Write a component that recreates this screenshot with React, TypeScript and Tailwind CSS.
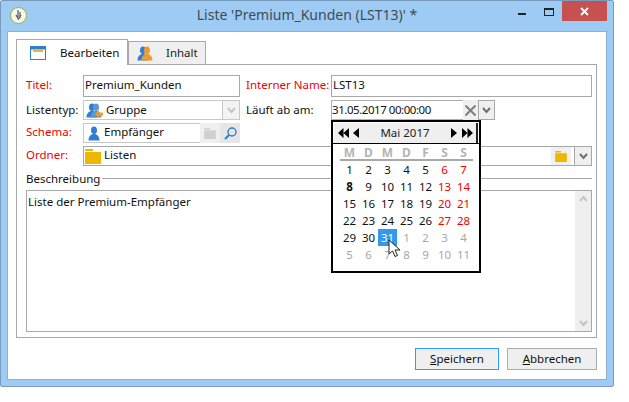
import { FC, ReactNode } from "react";

const weeks = [
  ["1", "2", "3", "4", "5", "6", "7"],
  ["8", "9", "10", "11", "12", "13", "14"],
  ["15", "16", "17", "18", "19", "20", "21"],
  ["22", "23", "24", "25", "26", "27", "28"],
  ["29", "30", "31", "1", "2", "3", "4"],
  ["5", "6", "7", "8", "9", "10", "11"],
];

const UserIcon: FC<{ color?: string }> = ({ color = "#2f7fd0" }) => (
  <svg width="12" height="15" viewBox="0 0 12 15">
    <ellipse cx="6" cy="4.2" rx="3" ry="3.8" fill={color} />
    <path d="M0.5 14.5 C0.5 10 3 9 4.5 8 L7.5 8 C9 9 11.500 10 11.500 14.500 Z" fill={color} />
  </svg>
);

const FolderIcon: FC<{ color?: string; w?: number; h?: number }> = ({ color = "#eeb800", w = 16, h = 15 }) => (
  <svg width={w} height={h} viewBox="0 0 16 15">
    <rect x="0" y="0" width="8" height="2" fill={color} />
    <rect x="0" y="3" width="16" height="12" fill={color} />
  </svg>
);

const Chevron: FC<{ color?: string; up?: boolean }> = ({ color = "#6f6f6f", up }) => (
  <svg width="9" height="7" viewBox="0 0 9 7">
    <path d={up ? "M1 6 L4.500 2 L8 6" : "M1 1 L4.500 5 L8 1"} fill="none" stroke={color} strokeWidth="2" />
  </svg>
);

const Label: FC<{ children: ReactNode; red?: boolean }> = ({ children, red }) => (
  <span className={`whitespace-nowrap ${red ? "text-[#f00000]" : "text-[#111]"}`}>{children}</span>
);

const Arrow: FC<{ left?: boolean; double?: boolean }> = ({ left, double }) => (
  <svg width={double ? 11 : 6} height="10" viewBox={double ? "0 0 11 10" : "0 0 6 10"}>
    {left ? (
      double ? (
        <path d="M5.500 0 V10 L0 5 Z M11 0 V10 L5.500 5 Z" fill="#000" />
      ) : (
        <path d="M6 0 V10 L0 5 Z" fill="#000" />
      )
    ) : double ? (
      <path d="M0 0 V10 L5.500 5 Z M5.500 0 V10 L11 5 Z" fill="#000" />
    ) : (
      <path d="M0 0 V10 L6 5 Z" fill="#000" />
    )}
  </svg>
);

const Calendar: FC = () => (
  <div className="absolute left-0 top-[20px] z-10 w-[150px] h-[153px] border-2 border-black bg-white flex flex-col">
    <div className="h-[20px] mx-px mt-px bg-[#efefef] border-r-2 border-[#222] flex items-center justify-between pl-[4px] pr-[3px] shrink-0">
      <div className="flex items-center gap-[4px]">
        <Arrow left double />
        <Arrow left />
      </div>
      <span className="text-[#222] text-[11.5px]">Mai 2017</span>
      <div className="flex items-center gap-[5px]">
        <Arrow />
        <Arrow double />
      </div>
    </div>
    <div className="h-[1px] bg-black shrink-0" />
    <div className="px-[7px] pt-[1px]">
      <div className="grid grid-cols-[repeat(7,19px)] h-[14px] items-center text-center font-bold text-[#b4b4b4] text-[12px]">
        {["M", "D", "M", "D", "F", "S", "S"].map((d, i) => (
          <span key={i}>{d}</span>
        ))}
      </div>
      <div className="h-[2px] bg-[#a8a8a8] w-[133px]" />
      {weeks.map((w, r) => (
        <div key={r} className="grid grid-cols-[repeat(7,19px)] h-[17px] items-center text-center text-[11.5px] tracking-[-0.2px]">
          {w.map((d, c) => {
            const muted = (r === 4 && c > 2) || r === 5;
            const selected = r === 4 && c === 2;
            const bold = r === 1 && c === 0;
            let cls = "text-[#111]";
            if (c > 4) cls = "text-[#f00000]";
            if (muted) cls = "text-[#a8a8a8]";
            if (selected) cls = "bg-[#3399ee] text-white";
            return (
              <span key={c} className={`${cls} ${bold ? "font-bold" : ""} h-[17px] leading-[17px]`}>
                {d}
              </span>
            );
          })}
        </div>
      ))}
    </div>
  </div>
);

export default function App() {
  return (
    <div className="w-[629px] h-[402px] bg-white text-[11.5px] leading-[16px] overflow-hidden font-['Noto_Sans','Liberation_Sans',sans-serif]">
      <div className="relative w-[614px] h-[387px] bg-[#9dcbf3] border border-[#7a9cbc] rounded-[2px] flex flex-col">
        {/* title bar */}
        <div className="h-[30px] shrink-0 grid grid-cols-[1fr_auto_1fr]">
          <div className="pl-[9px] pt-[6px]">
            <div className="w-[17px] h-[17px] rounded-full bg-[#f4f6ee] border border-[#8cb050] flex items-center justify-center">
              <svg width="9" height="11" viewBox="0 0 9 11">
                <path d="M4 0 V7 M6 2 V8 M2 5 L4.500 9 L7 5" fill="none" stroke="#555" strokeWidth="1.200" />
              </svg>
            </div>
          </div>
          <span className="text-[14px] leading-[30px] text-[#3d4b58] -mt-[1px]">
            Liste 'Premium_Kunden (LST13)' *
          </span>
          <div className="flex justify-end items-start pr-[6px]">
            <div className="w-[8px] h-[2px] bg-[#222] mt-[12px] mr-[18px]" />
            <div className="w-[10px] h-[8px] border border-t-2 border-[#222] mt-[7px] mr-[8px]" />
            <div className="w-[45px] h-[20px] bg-[#c75050] flex items-center justify-center">
              <svg width="9" height="9" viewBox="0 0 9 9">
                <path d="M1 1 L8 8 M8 1 L1 8" stroke="#fff" strokeWidth="1.800" />
              </svg>
            </div>
          </div>
        </div>

        {/* client area */}
        <div className="mx-[6px] h-[349px] bg-white border border-[#8fb0cf] flex flex-col pl-[8px] pr-[9px]">
          {/* tabs */}
          <div className="flex items-end h-[32px] shrink-0">
            <div className="w-[112px] h-[26px] -mb-px z-10 bg-white border border-b-0 border-[#a8a8a8] flex items-center pl-[13px] gap-[14px]">
              <svg width="16" height="14" viewBox="0 0 16 14">
                <rect x="0.500" y="0.500" width="15" height="13" fill="#fff" stroke="#2f7fd0" />
                <rect x="1" y="1" width="14" height="2.500" fill="#2f7fd0" />
                <rect x="3" y="4" width="10" height="2" fill="#eeb040" />
              </svg>
              <span className="text-[#111]">Bearbeiten</span>
            </div>
            <div className="w-[78px] h-[23px] bg-[#efefef] border border-b-0 border-[#a8a8a8] flex items-center pl-[8px] gap-[13px]">
              <div className="flex">
                <UserIcon />
                <span className="-ml-[8px] -z-0">
                  <UserIcon color="#ef9a2e" />
                </span>
              </div>
              <span className="text-[#222]">Inhalt</span>
            </div>
          </div>

          {/* panel */}
          <div className="w-[581px] h-[274px] border border-[#a8a8a8] pl-[9px] pr-[4px] pt-[10px] flex flex-col">
            <div className="relative flex flex-col gap-[3px] text-[#111]">
              <div className="flex h-[22px] items-center">
                <div className="w-[57px] pb-[2px]">
                  <Label red>Titel:</Label>
                </div>
                <div className="w-[157px] h-[22px] border border-[#a8a8a8] pl-[1px] pb-[2px] flex items-center">Premium_Kunden</div>
                <div className="w-[91px] pl-[6px] pb-[2px]">
                  <Label red>Interner Name:</Label>
                </div>
                <div className="w-[261px] h-[22px] border border-[#a8a8a8] pl-[1px] pb-[2px] flex items-center">LST13</div>
              </div>
              <div className="flex h-[20px] items-center">
                <div className="w-[57px]">
                  <Label>Listentyp:</Label>
                </div>
                <div className="w-[157px] h-[20px] border border-[#c8c8c8] flex items-center">
                  <div className="flex items-center pl-[2px] gap-[4px] flex-1">
                    <span className="relative flex w-[16px]">
                      <UserIcon />
                      <span className="-ml-[8px]">
                        <UserIcon color="#5a96d8" />
                      </span>
                      <svg className="absolute right-[-1px] bottom-0" width="8" height="8" viewBox="0 0 8 8">
                        <path d="M0 4 L4 0 V2.500 H8 V5.500 H4 V8 Z" fill="#ef9a2e" />
                      </svg>
                    </span>
                    <span>Gruppe</span>
                  </div>
                  <div className="w-[17px] h-[18px] border-l border-[#c8c8c8] bg-[#f3f3f3] flex items-center justify-center">
                    <Chevron color="#c4c4c4" />
                  </div>
                </div>
                <div className="w-[91px] pl-[6px]">
                  <Label>Läuft ab am:</Label>
                </div>
                <div className="relative flex items-center h-[20px]">
                  <div className="w-[132px] h-[20px] border border-r-0 border-[#b0b0b0] flex items-center tracking-[-0.45px]">
                    31.05.2017 00:00:00
                  </div>
                  <div className="w-[15px] h-[20px] bg-[#efefef] flex items-center justify-center">
                    <svg width="11" height="11" viewBox="0 0 11 11">
                      <path d="M0.500 0.500 L10.500 10.500 M10.500 0.500 L0.500 10.500" stroke="#7f7f7f" strokeWidth="2" />
                    </svg>
                  </div>
                  <div className="w-[17px] h-[20px] bg-[#efefef] border border-[#a8a8a8] flex items-center justify-center">
                    <Chevron />
                  </div>
                  <Calendar />
                  <svg className="absolute left-[57px] top-[139px] z-20" width="13" height="19" viewBox="0 0 13 19">
                    <path d="M1 1 V15 L4.500 12 L7 17.500 L9.500 16.500 L7 11 L12 11 Z" fill="#fff" stroke="#222" strokeWidth="1" />
                  </svg>
                </div>
              </div>
              <div className="flex h-[20px] items-center">
                <div className="w-[57px] pb-[2px]">
                  <Label red>Schema:</Label>
                </div>
                <div className="w-[117px] h-[20px] border border-r-0 border-[#c8c8c8] flex items-center pl-[4px] gap-[4px]">
                  <UserIcon />
                  <span className="pb-[2px]">Empfänger</span>
                </div>
                <div className="w-[20px] h-[20px] bg-[#efefef] flex items-center justify-center">
                  <FolderIcon color="#d0d0d0" w={12} h={11} />
                </div>
                <div className="w-[20px] h-[20px] bg-[#e6e6e6] flex items-center justify-center">
                  <svg width="13" height="13" viewBox="0 0 13 13">
                    <circle cx="8" cy="5" r="4" fill="none" stroke="#2f7fd0" strokeWidth="1.400" />
                    <path d="M5 8 L1 12" stroke="#2f7fd0" strokeWidth="2" />
                  </svg>
                </div>
              </div>
              <div className="flex h-[20px] items-center">
                <div className="w-[57px] pb-[2px]">
                  <Label red>Ordner:</Label>
                </div>
                <div className="w-[509px] h-[20px] border border-[#a8a8a8] flex items-center pl-px gap-[3px]">
                  <FolderIcon />
                  <span className="flex-1 pb-[2px]">Listen</span>
                  <div className="w-[20px] h-[18px] bg-[#f0f0f0] flex items-center justify-center">
                    <FolderIcon w={12} h={11} />
                  </div>
                  <div className="w-[17px] h-[18px] bg-[#efefef] border-l border-[#a8a8a8] flex items-center justify-center">
                    <Chevron />
                  </div>
                </div>
              </div>
            </div>

            <div className="flex items-center gap-[2px] mt-[4px] h-[16px] w-[566px] text-[#111]">
              <span className="pt-[2px]">Beschreibung</span>
              <div className="flex-1 h-px bg-[#a8a8a8]" />
            </div>
            <div className="w-[566px] h-[142px] mt-[4px] border border-[#a8a8a8] flex">
              <div className="flex-1 pl-[1px] pt-[3px] text-[#111]">Liste der Premium-Empfänger</div>
              <div className="w-[16px] bg-[#efefef] flex flex-col justify-between items-center py-[4px]">
                <Chevron color="#c4c4c4" up />
                <Chevron color="#c4c4c4" />
              </div>
            </div>
          </div>

          {/* buttons */}
          <div className="flex justify-end gap-[8px] mt-[10px] w-[581px]">
            <div className="w-[84px] h-[22px] bg-[#efefef] border border-[#3399ff] flex items-center justify-center text-[#111]">
              <span>
                <span className="underline">S</span>peichern
              </span>
            </div>
            <div className="w-[90px] h-[22px] bg-[#efefef] border border-[#adadad] flex items-center justify-center text-[#111]">
              <span>
                <span className="underline">A</span>bbrechen
              </span>
            </div>
          </div>
        </div>
      </div>
    </div>
  );
}
